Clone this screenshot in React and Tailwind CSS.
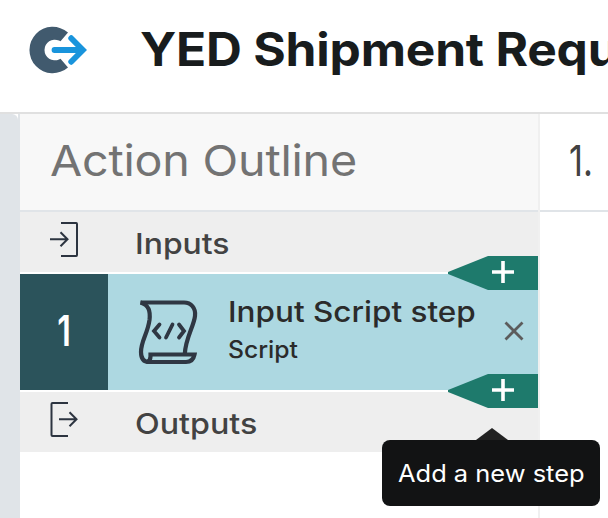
function Logo() {
  return (
    <svg className="h-[48px] w-[60px] shrink-0" viewBox="0 0 60 48" fill="none">
      <path d="M39 6.6A23.2 23.2 0 1 0 39 41.4L31.5 32.8L30 33.4A10.3 10.3 0 1 1 30 14.6L31.5 15.2Z" fill="#415a6e" />
      <path d="M25.5 24H52M42.2 12.2L53.9 24L42.2 35.8" stroke="#1994dc" strokeWidth="5.8" strokeLinecap="round" strokeLinejoin="miter" />
    </svg>
  );
}

function InputIcon() {
  return (
    <svg className="h-9 w-7" viewBox="0 0 28 36" fill="none" stroke="#2c3440" strokeWidth="2">
      <path d="M11 1H26.2Q27 1 27 2V33Q27 34 26.2 34H11" />
      <path d="M0 17.2H18M10.5 10.2L17.5 17.2L10.5 24.2" />
    </svg>
  );
}

function OutputIcon() {
  return (
    <svg className="h-9 w-7" viewBox="0 0 28 36" fill="none" stroke="#2c3440" strokeWidth="2">
      <path d="M18 1H2.5Q1.5 1 1.5 2V33Q1.5 34 2.5 34H18" />
      <path d="M9 17.2H27M19.5 10.2L26.5 17.2L19.5 24.2" />
    </svg>
  );
}

function ScriptIcon() {
  return (
    <svg className="h-[66px] w-[60px]" viewBox="0 0 60 66" fill="none" stroke="#2f3743" strokeWidth="4.2">
      <path d="M2.5 3.5H46C53 3.5 58 9 57 17C56 27 47.500 39 46.800 55" />
      <path d="M2.500 3.500C11 6 12.500 12 11.500 21C9.500 35 3 42 3 53C3 60 6 63 11 63H48C53 63 55.500 60.500 56.500 55.500H12.500V57.500C12.500 60.500 11 62.500 8.500 63" />
      <path d="M21.500 25.500L16 32L21.500 38.500M41 25.500L46 32L41 38.500M34.500 25.500L28 38.500" strokeWidth="3.800" strokeLinecap="round" />
    </svg>
  );
}

function AddStep({ className }) {
  return (
    <button className={`absolute right-0 h-[34px] w-[90px] ${className}`} aria-label="Add">
      <svg className="block h-full w-full" viewBox="0 0 90 34">
        <path d="M0 16L40 0H90V34H40L0 18Z" fill="#1e7a6c" />
        <path d="M44 16H66M55 5V27" stroke="#fff" strokeWidth="3.6" />
      </svg>
    </button>
  );
}

export default function App() {
  return (
    <div className="flex h-[518px] w-[608px] flex-col overflow-hidden bg-white font-['Inter',sans-serif] text-[#2b2b2b]">
      <header className="flex h-[114px] shrink-0 items-start border-b-2 border-[#e0e0e0] pt-[26px] pl-[29px]">
        <Logo />
        <h1 className="-mt-px ml-[51px] origin-left scale-x-[1.08] text-[46px] leading-[48px] font-bold tracking-[-0.2px] whitespace-nowrap text-[#181c1d]">YED Shipment Requ</h1>
      </header>
      <div className="flex min-h-0 flex-1">
        <div className="w-5 shrink-0 border-r-2 border-[#e0e4e8] bg-white">
          <div className="h-full w-full rounded-tr-[6px] bg-[#e0e4e8]" />
        </div>
        <aside className="w-[520px] shrink-0 border-r-2 border-[#f0f0f0]">
          <div className="flex h-[98px] items-center border-b-2 border-[#e0e4e8] bg-[#f8f8f8] pb-1 pl-[30px]">
            <h2 className="origin-left scale-x-[1.085] text-[43px] leading-none tracking-[-0.2px] whitespace-nowrap text-[#737373]">Action Outline</h2>
          </div>
          <div className="flex h-[60px] bg-[#eee] pt-[10px] pl-[30px] text-[#424242]">
            <InputIcon />
            <span className="ml-[57px] origin-left scale-x-[1.1] pt-1 text-[29px] leading-[36px] font-medium">Inputs</span>
          </div>
          <div className="relative my-0.5 flex h-[116px] bg-[#add8e1]">
            <div className="flex w-[88px] items-center justify-center bg-[#2b535b] pb-1 text-[43px] font-semibold text-white">
              <span className="scale-x-[0.75]">1</span>
            </div>
            <div className="pt-[25px] pl-[30px]">
              <ScriptIcon />
            </div>
            <div className="ml-[30px] pt-5">
              <div className="origin-left scale-x-[1.085] text-[29px] leading-[36px] font-medium whitespace-nowrap">Input Script step</div>
              <div className="mt-[6px] origin-left scale-x-[1.03] text-[24px] leading-[28px] font-medium">Script</div>
            </div>
            <svg className="absolute top-[47px] left-[484px] h-5 w-5" viewBox="0 0 20 20" stroke="#5c5c5c" strokeWidth="2.8">
              <path d="M1.5 1.5L18.5 18.5M18.5 1.5L1.5 18.5" />
            </svg>
            <AddStep className="-top-[18px]" />
            <AddStep className="-bottom-[18px]" />
            <div className="absolute top-[154px] left-[362px] z-10 flex flex-col">
              <svg className="ml-[94px] h-3 w-8" viewBox="0 0 32 12"><path d="M0 12L16 0L32 12Z" fill="#222" /></svg>
              <div className="flex h-[66px] w-[218px] items-center rounded-lg bg-[#121314] pt-0.5 pl-4 text-[24px] whitespace-nowrap text-white">
                <span className="origin-left scale-x-[1.06]">Add a new step</span>
              </div>
            </div>
          </div>
          <div className="flex h-[60px] bg-[#eee] pt-[10px] pl-[30px] text-[#424242]">
            <OutputIcon />
            <span className="ml-[57px] origin-left scale-x-[1.11] pt-1 text-[29px] leading-[36px] font-medium">Outputs</span>
          </div>
        </aside>
        <main className="min-w-0 flex-1">
          <div className="flex h-[98px] items-center border-b-2 border-[#e0e4e8] pb-1 pl-[29px] text-[43px] text-[#424242]">
            <span className="origin-left scale-x-[0.8]">1.</span>
          </div>
        </main>
      </div>
    </div>
  );
}
